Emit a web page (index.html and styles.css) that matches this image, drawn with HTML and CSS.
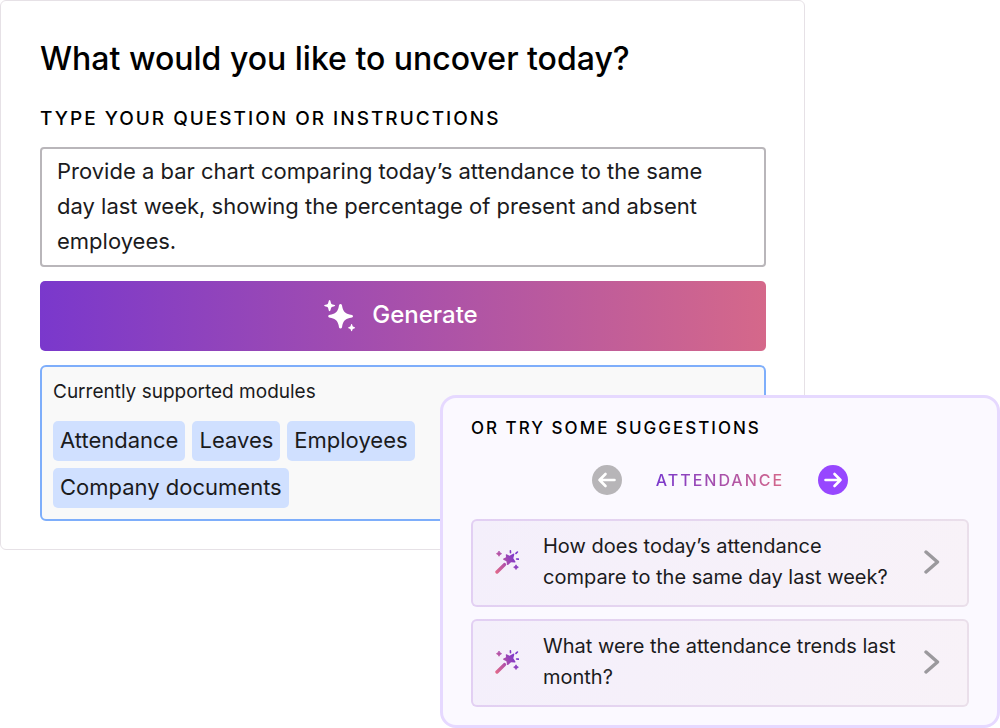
FILE: index.html
```html
<!DOCTYPE html>
<html lang="en">
<head>
  <meta charset="UTF-8">
  <meta name="viewport" content="width=device-width, initial-scale=1.0">
  <title>Ask a question</title>
  <link rel="stylesheet" href="styles.css">
</head>
<body>
  <!-- Shared icons -->
  <svg class="sprite" aria-hidden="true">
    <defs>
      <linearGradient id="wand-fill" gradientUnits="userSpaceOnUse" x1="1" y1="22" x2="23" y2="11">
        <stop offset="0" stop-color="#e0688a"/>
        <stop offset="1" stop-color="#7a35cc"/>
      </linearGradient>
      <symbol id="wand" viewBox="0 0 24 24">
        <g fill="none" stroke="url(#wand-fill)" stroke-linecap="round">
          <path d="M2 22 L9.5 14.6" stroke-width="3.4"/>
          <path d="M15.4 .8 L15.5 2.6 M22.4 2 L21 3.4 M21.6 9 L23.4 9.1" stroke-width="1.6"/>
        </g>
        <g fill="url(#wand-fill)">
          <path d="M11.6 4.2 L14.5 5.8 L18.6 3.6 Q19.4 3.5 19.3 4.4 L18.3 8.2 L20.4 11.6 Q20.6 12.6 19.6 12.6 L16 12.3 L13 15 Q12.2 15.3 12 14.4 L11.4 11.2 L8.4 9.8 Q7.7 9.2 8.5 8.6 L11 7.3 L10.8 4.8 Q10.9 4 11.6 4.2 Z"/>
          <path d="M4 1 Q4.6 3.1 6.6 3.7 Q4.6 4.2 4 6.3 Q3.4 4.2 1.4 3.7 Q3.4 3.1 4 1 Z" stroke="url(#wand-fill)" stroke-width=".7"/>
          <path d="M21 14.8 Q21.5 16.6 23.4 17.2 Q21.5 17.8 21 19.6 Q20.5 17.8 18.6 17.2 Q20.5 16.6 21 14.8 Z" stroke="url(#wand-fill)" stroke-width=".7"/>
        </g>
      </symbol>
      <symbol id="chevron" viewBox="0 0 16 24">
        <path d="M2 2 L13.5 12 L2 22" fill="none" stroke="currentColor" stroke-width="3.4" stroke-linecap="round" stroke-linejoin="round"/>
      </symbol>
      <symbol id="arrow" viewBox="0 0 30 30">
        <path d="M7.5 15 H22.5 M16.5 9 L22.5 15 L16.5 21" fill="none" stroke="currentColor" stroke-width="2.6" stroke-linecap="round" stroke-linejoin="round"/>
      </symbol>
    </defs>
  </svg>

  <main class="stage">
    <form class="ask">
      <h1>What would you like to uncover today?</h1>
      <label class="label" for="question">Type your question or instructions</label>
      <textarea id="question" rows="3" spellcheck="false">Provide a bar chart comparing today’s attendance to the same day last week, showing the percentage of present and absent employees.</textarea>

      <button class="generate" type="button">
        <svg viewBox="0 0 32 32" width="32" height="32" fill="currentColor" aria-hidden="true">
          <path d="M16.5 4 C18 4 18 5.4 18.3 7 C19.2 11.3 21.2 13.4 25.5 14.5 C27.5 15 29 15 29 16.2 C29 17.4 27.5 17.5 25.5 18 C21.2 19.1 19.2 21.2 18.3 25.5 C18 27.2 18 28.6 16.5 28.6 C15 28.6 15 27.2 14.7 25.5 C13.8 21.2 11.8 19.1 7.5 18 C5.5 17.5 4.2 17.4 4.2 16.2 C4.2 15 5.5 15 7.5 14.5 C11.8 13.4 13.8 11.3 14.7 7 C15 5.4 15 4 16.5 4 Z"/>
          <path d="M5.6 .1 C6.7 .1 6.6 3.2 7.5 4.1 C8.5 5 11.2 4.6 11.2 5.6 C11.2 6.6 8.5 6.4 7.5 7.3 C6.6 8.2 6.7 11.2 5.6 11.2 C4.5 11.2 4.6 8.2 3.7 7.3 C2.7 6.4 .1 6.6 .1 5.6 C.1 4.6 2.7 5 3.7 4.1 C4.6 3.2 4.5 .1 5.6 .1 Z"/>
          <path d="M27.6 24 C28.4 24 28.2 25.7 28.9 26.4 C29.5 27 31 26.9 31 27.7 C31 28.5 29.5 28.3 28.9 29 C28.2 29.6 28.4 31.2 27.6 31.2 C26.8 31.2 27 29.6 26.3 29 C25.7 28.3 24.2 28.5 24.2 27.7 C24.2 26.9 25.7 27 26.3 26.4 C27 25.7 26.8 24 27.6 24 Z"/>
        </svg>
        Generate
      </button>

      <section class="modules">
        <p>Currently supported modules</p>
        <ul>
          <li>Attendance</li>
          <li>Leaves</li>
          <li>Employees</li>
          <li>Company documents</li>
        </ul>
      </section>
    </form>

    <section class="suggestions">
      <h2 class="label">Or try some suggestions</h2>

      <nav class="topics">
        <button class="prev" type="button" aria-label="Previous topic"><svg><use href="#arrow"/></svg></button>
        <span>Attendance</span>
        <button class="next" type="button" aria-label="Next topic"><svg><use href="#arrow"/></svg></button>
      </nav>

      <div class="list">
        <button class="suggestion" type="button">
          <svg class="wand"><use href="#wand"/></svg>
          <span>How does today’s attendance compare to the same day last week?</span>
          <svg class="chevron"><use href="#chevron"/></svg>
        </button>
        <button class="suggestion" type="button">
          <svg class="wand"><use href="#wand"/></svg>
          <span>What were the attendance trends last month?</span>
          <svg class="chevron"><use href="#chevron"/></svg>
        </button>
      </div>
    </section>
  </main>
</body>
</html>
```
FILE: styles.css
```css
:root {
  --ink: #1b1b1d;
  --brand: linear-gradient(90deg, #7a38cc, #d5688a);
}

* {
  box-sizing: border-box;
}

body {
  margin: 0;
  background: #fff;
  color: var(--ink);
  font-family: Inter, "Liberation Sans", sans-serif;
}

h1, h2, p, ul {
  margin: 0;
  padding: 0;
}

button, textarea {
  font: inherit;
  color: inherit;
}

button {
  border: 0;
  padding: 0;
  cursor: pointer;
}

.sprite {
  position: absolute;
  width: 0;
  height: 0;
}

/* The suggestions panel shares the middle column with the form and overlaps it */
.stage {
  display: grid;
  grid-template-columns: 44fr 36.5fr 19.5fr;
  align-items: start;
}

.label {
  color: #000;
  font-weight: 500;
  line-height: 24px;
  letter-spacing: 2px;
  text-transform: uppercase;
}

/* Question form */
.ask {
  grid-area: 1 / 1 / 2 / 3;
  display: flex;
  flex-direction: column;
  padding: 38px 38px 28px 39px;
  border: 1px solid #e6e1e6;
  border-radius: 6px;

  & h1 {
    color: #000;
    font-size: 32px;
    font-weight: 500;
    line-height: 40px;
  }

  & .label {
    margin: 28px 0 16px;
    font-size: 19px;
  }

  & textarea {
    display: block;
    width: 100%;
    height: 120px;
    padding: 5px 32px 5px 15px;
    border: 2px solid #b9b6ba;
    border-radius: 4px;
    background: #fff;
    font-size: 22px;
    line-height: 35px;
    resize: none;
    overflow: hidden;
  }
}

.generate {
  display: flex;
  justify-content: center;
  align-items: center;
  gap: 16px;
  height: 70px;
  margin: 14px 0;
  padding: 0 4px 4px 0;
  border-radius: 5px;
  background: var(--brand);
  color: #fff;
  font-size: 24px;
  font-weight: 500;

  & svg {
    margin-top: 4px;
  }
}

.modules {
  padding: 12px 11px 11px;
  border: 2px solid #7eaefb;
  border-radius: 6px;
  background: #f9f9f9;

  & p {
    font-size: 19px;
    line-height: 26px;
  }

  & ul {
    display: flex;
    flex-wrap: wrap;
    gap: 7px;
    max-width: 400px;
    margin-top: 16px;
    list-style: none;
  }

  & li {
    padding: 0 7px 2px;
    border-radius: 5px;
    background: #d0e0ff;
    font-size: 22px;
    line-height: 38px;
  }
}

/* Suggestions */
.suggestions {
  grid-area: 1 / 2 / 2 / 4;
  margin-top: 395px;
  padding: 18px 28px;
  border: 3px solid #e6d9ff;
  border-radius: 16px;
  background: #fbf9ff;

  & .label {
    font-size: 17px;
  }
}

.topics {
  display: flex;
  justify-content: center;
  align-items: center;
  gap: 34px;
  margin: 25px 0 24px;

  & span {
    background: var(--brand);
    background-clip: text;
    color: transparent;
    font-size: 16px;
    font-weight: 500;
    letter-spacing: 2px;
    text-transform: uppercase;
  }

  & button {
    width: 30px;
    height: 30px;
    border-radius: 50%;
    color: #fff;
  }

  & svg {
    display: block;
    width: 30px;
    height: 30px;
  }

  & .prev {
    background: #b7b5b8;
  }

  & .prev svg {
    rotate: 180deg;
  }

  & .next {
    background: #9747ff;
  }
}

.list {
  display: grid;
  gap: 12px;
}

.suggestion {
  display: flex;
  align-items: center;
  gap: 24px;
  padding: 10px 27px 12px 22px;
  border: 2px solid transparent;
  border-radius: 6px;
  background:
    linear-gradient(100deg, #f4effb, #f8f2f8) padding-box,
    linear-gradient(100deg, #e2cff3, #eadfea) border-box;
  font-size: 20px;
  line-height: 31px;
  text-align: left;

  & span {
    flex: 1;
  }

  & .wand {
    width: 24px;
    height: 24px;
  }

  & .chevron {
    width: 16px;
    height: 24px;
    color: #9b999d;
  }
}
```
